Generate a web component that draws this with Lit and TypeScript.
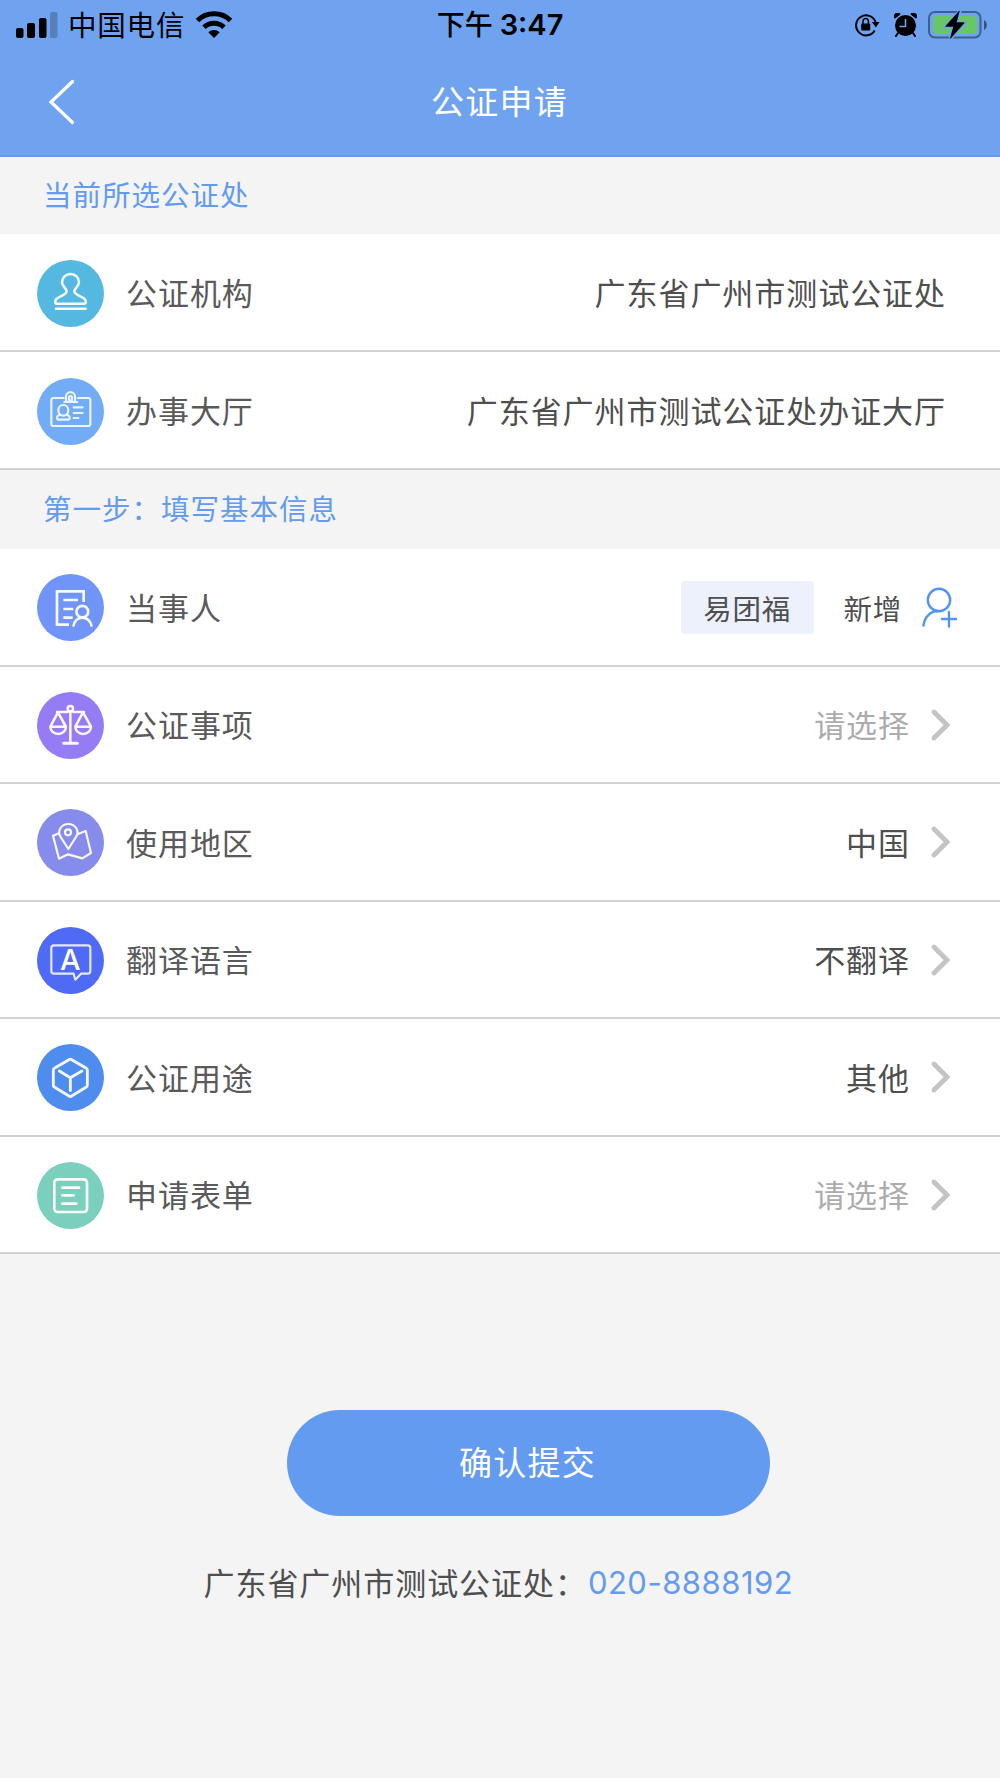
import { LitElement, html, css, svg, nothing, type SVGTemplateResult } from "lit";
import { customElement, property } from "lit/decorators.js";

/* Pictograms share a 201-unit square with the disc behind them. */
const glyphs: Record<string, { fill: string; art: SVGTemplateResult }> = {
  stamp: {
    fill: "#54b8e1",
    art: svg`<path d="M89 93C88 85 75 80 75 66A25.5 24 0 0 1 126 66C126 80 113 85 112 93C112 108 146 110 146 123V127Q146 131 142 131H59Q55 131 55 127V123C55 110 89 108 89 93Z"/><path d="M57 146H146"/>`,
  },
  card: {
    fill: "#72acf6",
    art: svg`<g stroke-width="6.5" stroke-opacity=".85"><path d="M80 60H49Q43 60 43 66V138Q43 144 49 144H153Q160 144 160 138V66Q160 60 153 60H122"/><path d="M82 72H121M87 72V56A13.500 13.500 0 0 1 114 56V72M96 68V59A4.500 5 0 0 1 105 59V68Z"/><ellipse cx="79" cy="97" rx="15" ry="16"/><path d="M69 110Q60 113 60 119Q60 125 66 125H92Q98 125 98 119Q98 113 89 110M110 88H137M110 105H137M110 120H124"/></g>`,
  },
  party: {
    fill: "#7094f8",
    art: svg`<g stroke-width="8" stroke-linecap="butt" stroke-linejoin="miter"><path d="M140 84V52H60V152H96M79 78H123M79 105H109M79 131H107"/><circle cx="136" cy="113" r="17.500"/><path d="M109 158C112 122 160 122 164 158"/></g>`,
  },
  scales: {
    fill: "#957cf5",
    art: svg`<path d="M60 60H92M109 60H141M100 59V152"/><circle cx="100" cy="50" r="8"/><path d="M80 154H121" stroke-width="9"/><path d="M63 61L40 104A23.500 22 0 0 0 87 104ZM40 104H86L63 61M138 61L115 104A23.500 22 0 0 0 162 104ZM115 104H161"/>`,
  },
  map: {
    fill: "#858cec",
    art: svg`<g stroke-width="6.500"><path d="M94 120L71 84C59 66 73 45 94 45C115 45 129 66 117 84Z"/><circle cx="93" cy="70" r="9"/><path d="M66 73L48 80L66 149L93 136L136 148L162 132L146 66L123 75"/></g>`,
  },
  translate: {
    fill: "#4f6bf6",
    art: svg`<path stroke-width="6.500" stroke-opacity=".85" d="M51 55H152Q160 55 160 63V132Q160 140 152 140H132L115 158L110 140H51Q43 140 43 132V63Q43 55 51 55Z"/><text class="letter" x="100" y="128" text-anchor="middle">A</text>`,
  },
  cube: {
    fill: "#4e8cee",
    art: svg`<g stroke-width="8.500"><path d="M96 47Q100 44 104 47L147 72Q151 74 151 79V124Q151 128 147 130L104 156Q100 159 96 156L53 130Q49 128 49 124V79Q49 74 53 72Z"/><path d="M67 81L100 101L135 81M100 101V140"/></g>`,
  },
  form: {
    fill: "#7bd0bd",
    art: svg`<g stroke-width="8"><rect x="52" y="52" width="98" height="98" rx="10"/><path d="M76 77H126M76 100H110M76 125H118"/></g>`,
  },
};

@customElement("row-icon")
export class RowIcon extends LitElement {
  static styles = css`
    :host { display: block; width: 67px; height: 67px; }
    svg { display: block; }
    .letter { font: 500 87px Inter, "Liberation Sans", sans-serif; fill: #fff; stroke: none; }
  `;
  @property() name = "stamp";
  render() {
    const g = glyphs[this.name];
    return html`<svg width="67" height="67" viewBox="0 0 201 201">
      <circle cx="100.5" cy="100.5" r="100.5" fill=${g.fill}></circle>
      <g fill="none" stroke="#fff" stroke-opacity=".94" stroke-width="7.500" stroke-linecap="round" stroke-linejoin="round">${g.art}</g>
    </svg>`;
  }
}

@customElement("form-row")
export class FormRow extends LitElement {
  static styles = css`
    :host {
      display: flex; align-items: center; box-sizing: border-box; height: 117.5px;
      padding: 0 54px 0 37px; background: #fff; border-bottom: 2px solid #d2d2d3;
      font-size: 31px; letter-spacing: 0.95px; color: #5a5a5a;
    }
    :host([link]) { padding-right: 50px; }
    row-icon { margin-top: 2px; }
    .label { margin-left: 22px; line-height: 40px; }
    .value { margin-left: auto; display: flex; align-items: center; line-height: 40px; color: #4f4f4f; }
    .value.empty { color: #acacac; }
    .chevron { display: block; margin: 1px 0 0 20px; }
  `;
  @property() icon = "stamp";
  @property() label = "";
  @property() value = "";
  @property({ type: Boolean }) empty = false;
  @property({ type: Boolean }) link = false;
  render() {
    return html`
      <row-icon name=${this.icon}></row-icon>
      <span class="label">${this.label}</span>
      <div class="value ${this.empty ? "empty" : ""}">
        <slot>${this.value}</slot>
        ${this.link
          ? html`<svg class="chevron" width="20" height="34" viewBox="0 0 20 34">
              <path d="M4 4L17 17L4 30" fill="none" stroke="#c4c4c6" stroke-width="4.800" stroke-linecap="round" stroke-linejoin="miter"></path>
            </svg>`
          : nothing}
      </div>`;
  }
}

@customElement("app-root")
export class AppRoot extends LitElement {
  static styles = css`
    :host {
      display: block; min-height: 1778px; background: #f4f4f4;
      font-family: "Noto Sans CJK SC", sans-serif;
    }
    svg { display: block; }
    .top { box-sizing: border-box; height: 157px; background: #6fa3f0; border-bottom: 2px solid #629bef; }
    .status {
      display: grid; grid-template-columns: 1fr auto 1fr; align-items: center;
      height: 50px; padding: 0 13px 0 16px; color: #000;
    }
    .carrier { display: flex; align-items: center; font-size: 28.5px; letter-spacing: 0.8px; line-height: 40px; }
    .carrier .name { margin: 0 10px 2px 10px; }
    .clock { font-size: 28px; font-weight: 500; line-height: 40px; display: flex; margin: 0 3px 2px 0; }
    .digits { font-family: Inter, sans-serif; font-size: 29px; font-weight: 600; margin: 2px 0 0 7px; }
    .indicators { display: flex; align-items: center; justify-content: flex-end; }
    .alarm { margin: 0 11px 0 14px; }
    .nav { display: grid; grid-template-columns: 1fr auto 1fr; align-items: center; height: 104px; padding: 0 48px 0 47px; }
    .title { font-size: 33px; letter-spacing: 1.2px; line-height: 44px; color: #fff; margin-bottom: 4px; }
    .section {
      display: flex; align-items: center; box-sizing: border-box; height: 77px; padding: 0 0 4px 43px;
      color: #629bf0; font-size: 28.5px; letter-spacing: 1px;
    }
    .section.step { height: 79px; }
    .group { display: flex; flex-direction: column; }
    .office form-row { height: 118px; }
    .people { display: flex; align-items: center; font-size: 28.5px; letter-spacing: 0.7px; margin: 2px -13px 0 0; }
    .chip {
      box-sizing: border-box; width: 133px; height: 53px; border-radius: 4px; background: #edf1fb;
      display: flex; align-items: center; justify-content: center; margin-right: 30px;
    }
    .person { margin-left: 19px; }
    .submit {
      display: flex; align-items: center; justify-content: center; box-sizing: border-box; width: 483px; height: 106px;
      margin: 156px 0 0 287px; border: 0; padding: 0 2px 4px 0; border-radius: 53px; background: #629bf0; color: #fff;
      font-family: inherit; font-size: 33px; letter-spacing: 1.200px;
    }
    .contact { display: flex; align-items: center; margin: 43px 0 0 203.5px; font-size: 31px; letter-spacing: 0.95px; line-height: 44px; color: #4f4f4f; }
    .phone { color: #629bf0; font-family: Inter, sans-serif; letter-spacing: 0.5px; margin: 2px 0 0 1px; }
  `;

  render() {
    return html`
      <header class="top">
        <div class="status">
          <div class="carrier">
            <svg width="42" height="28" viewBox="0 0 42 28">
              <rect x="0" y="17" width="7.500" height="10" rx="2"></rect>
              <rect x="11" y="12" width="8" height="15" rx="2"></rect>
              <rect x="23" y="7" width="7.500" height="20" rx="2"></rect>
              <rect x="34" y="1" width="7.500" height="26" rx="2" opacity=".22"></rect>
            </svg>
            <span class="name">中国电信</span>
            <svg width="38" height="28" viewBox="0 0 38 28">
              <path d="M2.500 9.500C11.500 .6 26.500 .6 35.500 9.500" fill="none" stroke="#000" stroke-width="5"></path>
              <path d="M9 16.300C14.500 11 23.500 11 29 16.300" fill="none" stroke="#000" stroke-width="5"></path>
              <path d="M13.300 21.300Q19 16.800 24.700 21.300L19 27Z"></path>
            </svg>
          </div>
          <div class="clock">下午<span class="digits">3:47</span></div>
          <div class="indicators">
            <svg width="26" height="24" viewBox="0 0 26 24">
              <path d="M20.700 17.500A10 10 0 1 1 21.500 9" fill="none" stroke="#000" stroke-width="2"></path>
              <path d="M18 9H25.500L21.800 14.500Z"></path>
              <rect x="7.200" y="10.500" width="9" height="7" rx="1"></rect>
              <path d="M9 11V8.500A2.700 2.900 0 0 1 14.400 8.500V11" fill="none" stroke="#000" stroke-width="1.500"></path>
            </svg>
            <svg class="alarm" width="23" height="24" viewBox="0 0 23 24">
              <circle cx="11.500" cy="12.500" r="10.500"></circle>
              <path d="M.9 5.200A3.300 3.300 0 0 1 6.200 1.200ZM22.100 5.200A3.300 3.300 0 0 0 16.800 1.200Z" stroke="#000" stroke-width="1"></path>
              <path d="M4 20L2 23M19 20L21 23" stroke="#000" stroke-width="2" stroke-linecap="round"></path>
              <path d="M11.500 6V13.500H5.500" fill="none" stroke="#6fa3f0" stroke-width="1.600"></path>
            </svg>
            <svg width="59" height="30" viewBox="0 0 59 30">
              <rect x="1" y="2" width="51.500" height="25.500" rx="6" fill="none" stroke="#000" stroke-opacity=".42" stroke-width="2"></rect>
              <path d="M56 10V20Q58.800 18.500 58.800 15T56 10Z" fill-opacity=".5"></path>
              <rect x="5" y="6" width="44" height="18" rx="3.500" fill="#67c767"></rect>
              <path d="M32 .8L18 16.500H25.500L22.500 28.500L36.500 12.800H28.500Z" stroke="#6fa3f0" stroke-width="3.500"></path>
              <path d="M31.200 1.200L17.700 16.300H25.800L22.500 28.300L36.200 12.800H28.200Z" stroke="#000" stroke-width=".8" stroke-linejoin="round"></path>
            </svg>
          </div>
        </div>
        <nav class="nav">
          <svg width="30" height="46" viewBox="0 0 30 46">
            <path d="M25.500 2.500L4 23L25.500 43.500" fill="none" stroke="#fff" stroke-width="3.200" stroke-linecap="round"></path>
          </svg>
          <span class="title">公证申请</span>
        </nav>
      </header>

      <div class="section">当前所选公证处</div>
      <div class="group office">
        <form-row icon="stamp" label="公证机构" value="广东省广州市测试公证处"></form-row>
        <form-row icon="card" label="办事大厅" value="广东省广州市测试公证处办证大厅"></form-row>
      </div>

      <div class="section step">第一步：填写基本信息</div>
      <div class="group">
        <form-row icon="party" label="当事人">
          <div class="people">
            <span class="chip">易团福</span>
            <span>新增</span>
            <svg class="person" width="38" height="42" viewBox="0 0 38 42" fill="none" stroke="#5294f2" stroke-width="2.400" stroke-linecap="round">
              <circle cx="18" cy="13" r="11.200"></circle>
              <path d="M2.500 38.500C3.500 30 9.500 24 17 24M21 32H35M28 25V39.500"></path>
            </svg>
          </div>
        </form-row>
        <form-row icon="scales" label="公证事项" value="请选择" empty link></form-row>
        <form-row icon="map" label="使用地区" value="中国" link></form-row>
        <form-row icon="translate" label="翻译语言" value="不翻译" link></form-row>
        <form-row icon="cube" label="公证用途" value="其他" link></form-row>
        <form-row icon="form" label="申请表单" value="请选择" empty link></form-row>
      </div>

      <button class="submit">确认提交</button>
      <div class="contact">广东省广州市测试公证处：<span class="phone">020-8888192</span></div>
    `;
  }
}
